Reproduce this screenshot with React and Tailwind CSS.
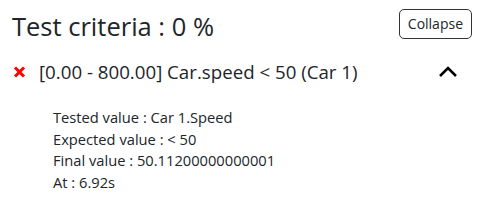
import React from 'react';

const font = { fontFamily: '"Open Sans", "Noto Sans", sans-serif' };

const details = [
  'Tested value : Car 1.Speed',
  'Expected value : < 50',
  'Final value : 50.11200000000001',
  'At : 6.92s',
];

export default function App() {
  return (
    <div className="w-[482px] h-[222px] bg-white text-[#212529] px-3 pt-[9px]" style={font}>
      {/* Header */}
      <div className="flex items-start justify-between">
        <h1 className="text-[25.5px] leading-[34px] font-normal">Test criteria : 0 %</h1>
        <button className="mr-[-2px] h-[30px] px-2 border border-[#333] rounded-[5px] text-[14px] leading-none bg-white">
          Collapse
        </button>
      </div>

      {/* Criterion */}
      <div className="mt-[16px] flex items-center justify-between pr-[12px]">
        <div className="flex items-center gap-[13px]">
          <svg width="13" height="12" viewBox="0 0 13 12" className="ml-[1px]">
            <path d="M2 1.5 L11 10.5 M11 1.5 L2 10.5" stroke="#ff0000" strokeWidth="3" strokeLinecap="butt" />
          </svg>
          <span className="text-[18.7px] leading-[25px]">[0.00 - 800.00] Car.speed &lt; 50 (Car 1)</span>
        </div>
        <svg width="20" height="12" viewBox="0 0 20 12">
          <path d="M2 10 L10 2 L18 10" stroke="#000" strokeWidth="2.6" fill="none" />
        </svg>
      </div>

      {/* Details */}
      <div className="mt-[23px] pl-[41px] text-[14.7px] leading-[21.7px]">
        {details.map((line) => (
          <div key={line}>{line}</div>
        ))}
      </div>
    </div>
  );
}
